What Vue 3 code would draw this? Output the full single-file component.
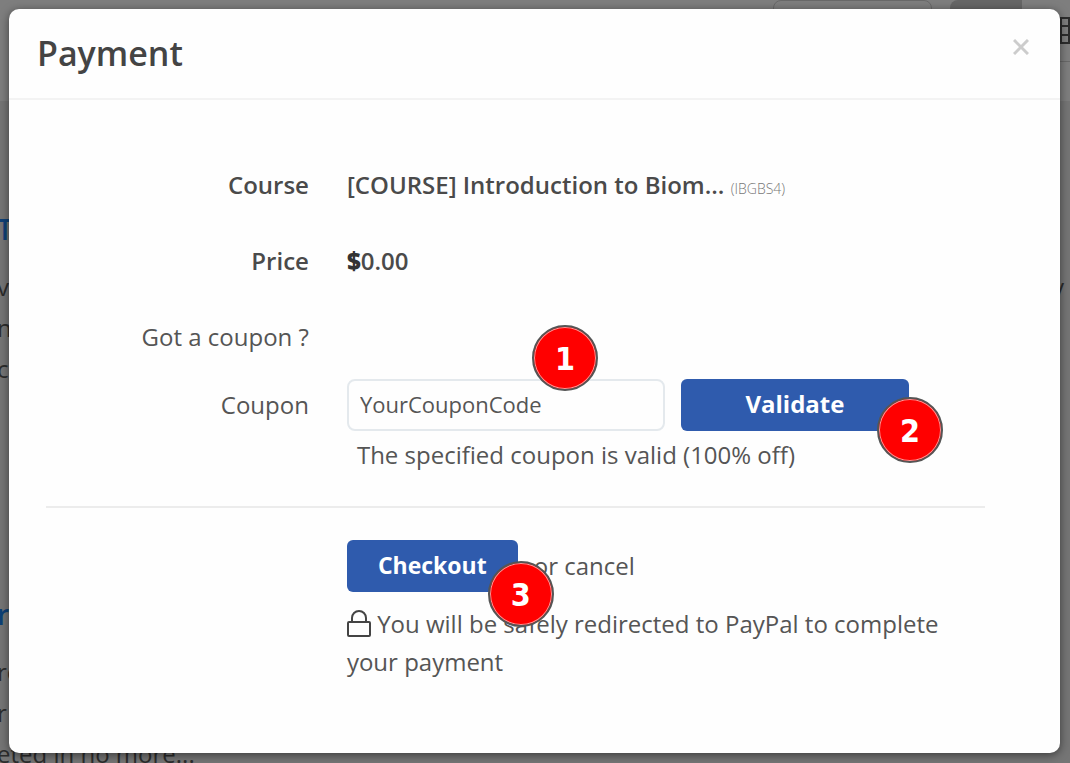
<script setup>
import { ref } from 'vue'

const coupon = ref('YourCouponCode')
</script>

<template>
  <div class="screen">
    <div class="page" aria-hidden="true">
      <div class="topbar">
        <span class="search"></span>
        <span class="search-button"></span>
        <svg class="grid-icon" viewBox="0 0 27 27" width="27" height="27">
          <path d="M2 1H26V26H2ZM2 9H26M2 18H26M10 1V26M18 1V26" />
        </svg>
      </div>
      <div class="article first">
        <div class="title">T</div>
        <p class="split"><span>v</span><span>y</span></p>
        <p>n</p>
        <p>c</p>
      </div>
      <div class="article">
        <div class="title">r</div>
        <p>ro</p>
        <p>r</p>
        <p>eted in no more...</p>
      </div>
    </div>

    <section class="modal" role="dialog" aria-labelledby="modal-title">
      <header class="modal-header">
        <h1 id="modal-title">Payment</h1>
        <button class="close" type="button" aria-label="Close">
          <svg viewBox="0 0 16 16" width="16" height="16">
            <path d="M1 1L15 15M15 1L1 15" />
          </svg>
        </button>
      </header>

      <form class="form" @submit.prevent>
        <div class="row strong">
          <span class="label">Course</span>
          <span>[COURSE] Introduction to Biom... <small>(IBGBS4)</small></span>
        </div>
        <div class="row strong">
          <span class="label">Price</span>
          <span><b>$</b>0.00</span>
        </div>
        <div class="row">
          <span class="label">Got a coupon ?</span>
        </div>
        <div class="row coupon-row">
          <label class="label" for="coupon">Coupon</label>
          <div class="coupon">
            <div class="field">
              <input id="coupon" v-model="coupon" type="text" />
              <span class="marker on-field">1</span>
            </div>
            <div class="validate">
              <button class="primary" type="button">Validate</button>
              <span class="marker on-corner">2</span>
            </div>
          </div>
          <p class="help">The specified coupon is valid (100% off)</p>
        </div>

        <hr />

        <div class="row checkout-row">
          <div class="actions">
            <div class="checkout">
              <button class="primary" type="submit">Checkout</button>
              <span class="marker on-checkout">3</span>
            </div>
            <a href="#">or cancel</a>
          </div>
          <p class="note">
            <svg class="lock" viewBox="0 0 24 27" width="24" height="27">
              <rect x="1" y="12" width="22" height="14" rx="1" />
              <path d="M5 12V8a7 7 0 0 1 14 0V12" />
            </svg>
            You will be safely redirected to PayPal to complete your payment
          </p>
        </div>
      </form>
    </section>
  </div>
</template>

<style>
body {
  margin: 0;
  background: #757575;
}
</style>

<style scoped>
* {
  box-sizing: border-box;
}

.screen {
  position: relative;
  min-height: 100vh;
  padding: 9px 10px 10px 9px;
  overflow: hidden;
  color: #555;
  font-family: "Open Sans", sans-serif;
  font-size: 24px;
  line-height: 38px;
}

.page {
  position: absolute;
  inset: 0;
  overflow: hidden;
  background: linear-gradient(#7e7e7e 101px, #757575 101px);
  color: #2c2c2c;
  line-height: 41px;
}

.topbar {
  display: flex;
  justify-content: flex-end;
  height: 62px;
  margin-left: 50%;
  border-bottom: 1px solid #696969;
}

.search {
  width: 159px;
  height: 40px;
  margin-right: 18px;
  border: 1px solid #696969;
  border-radius: 8px;
}

.search-button {
  width: 72px;
  height: 40px;
  margin-right: 37px;
  border-radius: 8px 0 0 0;
  background: #666;
}

.grid-icon {
  flex: none;
  margin: 17px -16px 0 0;
  fill: none;
  stroke: #2c2c2c;
  stroke-width: 2;
}

.article {
  margin-left: -3px;
  padding-top: 205px;
}

.article.first {
  padding-top: 147px;
}

.title {
  margin-bottom: 16px;
  color: #0e4076;
  font-size: 28px;
  font-weight: 600;
}

.page p {
  margin: 0;
}

.split {
  display: flex;
  justify-content: space-between;
  padding-right: 6px;
}

.modal {
  position: relative;
  min-height: 744px;
  border-radius: 10px;
  background: #fefefe;
  box-shadow: 0 2px 10px rgba(0, 0, 0, 0.5);
}

.modal-header {
  display: flex;
  justify-content: space-between;
  align-items: flex-start;
  padding: 21px 31px 22px 28px;
  border-bottom: 2px solid #f3f3f3;
}

h1 {
  margin: 0;
  color: #444;
  font-size: 34px;
  font-weight: 600;
  line-height: 46px;
}

.close {
  display: flex;
  margin-top: 9px;
  padding: 0;
  border: 0;
  background: none;
}

.close svg {
  fill: none;
  stroke: #ccc;
  stroke-width: 3;
}

.form {
  padding: 66px 75px 64px 37px;
}

.row {
  display: grid;
  grid-template-columns: 28% 1fr;
  column-gap: 38px;
  margin-bottom: 38px;
}

.label {
  text-align: right;
}

.strong {
  color: #4a4a4a;
  font-weight: 600;
}

.strong b {
  color: #333;
  font-weight: 800;
  line-height: 1;
}

small {
  color: #777;
  font-size: 14px;
  font-weight: 300;
  line-height: 1;
}

.coupon-row {
  margin: -15px 0 32px;
  align-items: center;
}

.coupon {
  display: flex;
  gap: 16px;
}

.field,
.validate,
.checkout {
  position: relative;
}

.field {
  flex: 0 1 318px;
}

.validate {
  flex: 0 1 228px;
}

input {
  display: block;
  width: 100%;
  height: 52px;
  padding: 0 11px 2px;
  border: 2px solid #e4e9ed;
  border-radius: 8px;
  background: #fefefe;
  color: #555;
  font: inherit;
  font-size: 22px;
}

.primary {
  display: block;
  width: 100%;
  height: 52px;
  padding: 0 31px 2px;
  border: 0;
  border-radius: 6px;
  background: #2f5bad;
  color: #fff;
  font: inherit;
  font-weight: 700;
}

.checkout .primary {
  font-size: 23px;
}

.help {
  grid-column: 2;
  margin: 5px 0 0 10px;
}

hr {
  height: 2px;
  margin: 0 0 32px;
  border: 0;
  background: #ececec;
}

.checkout-row {
  margin-bottom: 0;
}

.actions,
.note {
  grid-column: 2;
}

.actions {
  display: flex;
  align-items: center;
  gap: 16px;
}

a {
  color: inherit;
  text-decoration: none;
}

.note {
  margin: 13px 0 0;
}

.lock {
  vertical-align: -4px;
  fill: none;
  stroke: #444;
  stroke-width: 2;
}

.marker {
  position: absolute;
  z-index: 1;
  width: 66px;
  height: 66px;
  border: 2px solid #555;
  border-radius: 50%;
  background: #f00;
  box-shadow: inset 0 0 0 1px #f99;
  color: #fff;
  font-family: "DejaVu Sans Condensed", "DejaVu Sans", sans-serif;
  font-size: 32px;
  font-weight: 700;
  line-height: 64px;
  text-align: center;
}

.on-field {
  right: 67px;
  bottom: 40px;
}

.on-corner {
  right: -34px;
  top: 18px;
}

.on-checkout {
  right: -36px;
  top: 21px;
}
</style>
